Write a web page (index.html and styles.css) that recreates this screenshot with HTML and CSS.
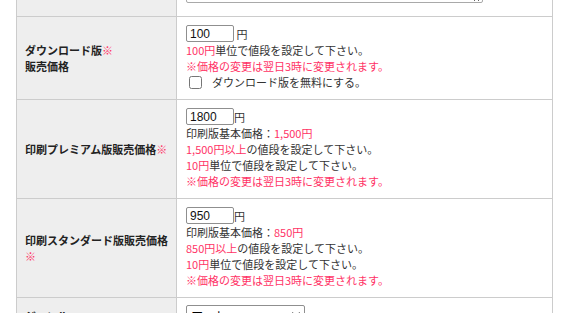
FILE: index.html
```html
<!DOCTYPE html>
<html lang="ja">
<head>
<meta charset="utf-8">
<title>販売価格</title>
<link rel="stylesheet" href="styles.css">
</head>
<body>
<div class="page">
  <table class="form">
    <tr>
      <th class="label"></th>
      <td class="field"><textarea class="memo"></textarea></td>
    </tr>
    <tr>
      <th class="label">ダウンロード版<span class="req">※</span><br>販売価格</th>
      <td class="field">
        <div class="price-line"><input class="price" type="text" value="100"> 円</div>
        <div class="line"><span class="red">100円</span>単位で値段を設定して下さい。</div>
        <div class="line red">※価格の変更は翌日3時に変更されます。</div>
        <label class="check-line"><input class="check" type="checkbox"><span>ダウンロード版を無料にする。</span></label>
      </td>
    </tr>
    <tr>
      <th class="label">印刷プレミアム版販売価格<span class="req">※</span></th>
      <td class="field">
        <div class="price-line"><input class="price" type="text" value="1800">円</div>
        <div class="line">印刷版基本価格：<span class="red">1,500円</span></div>
        <div class="line"><span class="red">1,500円以上</span>の値段を設定して下さい。</div>
        <div class="line"><span class="red">10円</span>単位で値段を設定して下さい。</div>
        <div class="line red">※価格の変更は翌日3時に変更されます。</div>
      </td>
    </tr>
    <tr>
      <th class="label">印刷スタンダード版販売価格<span class="req">※</span></th>
      <td class="field">
        <div class="price-line"><input class="price" type="text" value="950">円</div>
        <div class="line">印刷版基本価格：<span class="red">850円</span></div>
        <div class="line"><span class="red">850円以上</span>の値段を設定して下さい。</div>
        <div class="line"><span class="red">10円</span>単位で値段を設定して下さい。</div>
        <div class="line red">※価格の変更は翌日3時に変更されます。</div>
      </td>
    </tr>
    <tr>
      <th class="label">ジャンル</th>
      <td class="field">
        <select class="genre"><option>アート</option></select>
      </td>
    </tr>
  </table>
</div>
</body>
</html>
```

FILE: styles.css
```css
html, body {
  margin: 0;
  padding: 0;
  background: #ffffff;
}

body {
  font-family: "Noto Sans CJK JP", "Noto Sans", sans-serif;
  font-size: 11px;
  color: #333333;
  overflow: hidden;
}

.page {
  margin-top: -56px;
  padding-left: 16px;
}

.form {
  border-collapse: collapse;
  width: 537px;
}

.form th,
.form td {
  border: 1px solid #cccccc;
}

.label {
  width: 143px;
  background: #eeeeee;
  text-align: left;
  vertical-align: middle;
  font-weight: bold;
  line-height: 16px;
  padding: 8px 8px 9px 8px;
  color: #222222;
}

.field {
  vertical-align: top;
  padding: 8px 9px 9px 9px;
  line-height: 16px;
}

.req,
.red {
  color: #ff3366;
  font-weight: normal;
}

.memo {
  display: block;
  box-sizing: border-box;
  width: 297px;
  height: 50px;
  margin: 0 0 4px 0;
  border: 1px solid #a9a9a9;
  border-radius: 2px;
}

.price-line {
  display: flex;
  align-items: center;
  height: 17px;
  white-space: pre;
}

.price {
  box-sizing: border-box;
  width: 48px;
  height: 17px;
  margin: 0;
  padding: 0 3px;
  border: 1px solid #8f8f8f;
  border-radius: 2px;
  font-family: "Liberation Sans", Arial, sans-serif;
  font-size: 12px;
  color: #111111;
}

.line {
  height: 16px;
}

.check-line {
  display: flex;
  align-items: center;
  gap: 10px;
  height: 16px;
  padding-left: 3px;
}

.check {
  width: 13px;
  height: 13px;
  margin: 0;
}

.genre {
  box-sizing: border-box;
  width: 119px;
  height: 20px;
  margin-top: -1px;
  font-family: "Noto Sans CJK JP", sans-serif;
  font-size: 12px;
  border: 1px solid #8f8f8f;
  border-radius: 2px;
  background: #ffffff;
}
```
